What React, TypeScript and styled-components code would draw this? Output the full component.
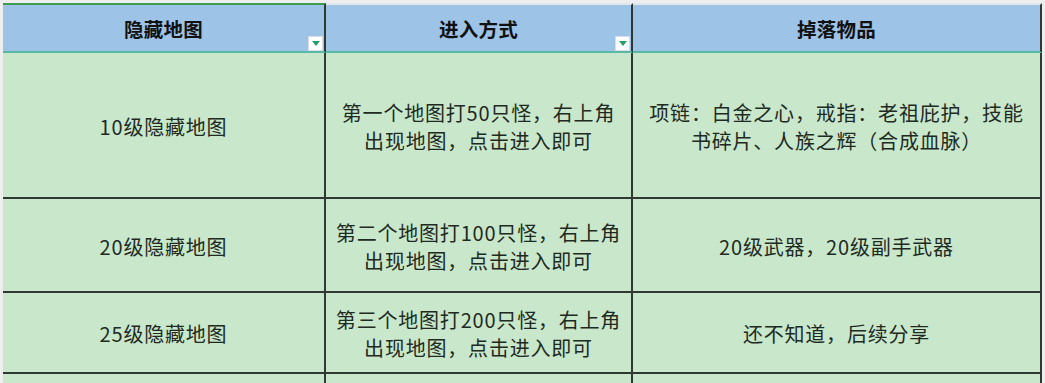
import React from 'react';
import styled, { createGlobalStyle } from 'styled-components';

const GlobalStyle = createGlobalStyle`
  html, body {
    margin: 0;
    padding: 0;
    background: #eeeeee;
    overflow: hidden;
  }
  body {
    font-family: 'Noto Sans CJK SC', 'Noto Sans', sans-serif;
  }
`;

const rows = [
  {
    height: 146,
    name: '10级隐藏地图',
    entry: ['第一个地图打50只怪，右上角', '出现地图，点击进入即可'],
    drops: ['项链：白金之心，戒指：老祖庇护，技能', '书碎片、人族之辉（合成血脉）'],
  },
  {
    height: 94,
    name: '20级隐藏地图',
    entry: ['第二个地图打100只怪，右上角', '出现地图，点击进入即可'],
    drops: ['20级武器，20级副手武器'],
  },
  {
    height: 81,
    name: '25级隐藏地图',
    entry: ['第三个地图打200只怪，右上角', '出现地图，点击进入即可'],
    drops: ['还不知道，后续分享'],
  },
  {
    height: 20,
    name: '',
    entry: [],
    drops: [],
  },
];

const App = () => (
  <>
    <GlobalStyle />
    <Page>
      <Sheet>
        <HeadCell $accent>
          隐藏地图
          <FilterButton />
        </HeadCell>
        <HeadCell>
          进入方式
          <FilterButton />
        </HeadCell>
        <HeadCell>掉落物品</HeadCell>
        {rows.map((row, i) => (
          <React.Fragment key={i}>
            <BodyCell style={{ height: row.height }}>{row.name}</BodyCell>
            <BodyCell style={{ height: row.height }}>
              {row.entry.map((line) => (
                <Line key={line}>{line}</Line>
              ))}
            </BodyCell>
            <BodyCell style={{ height: row.height }}>
              {row.drops.map((line) => (
                <Line key={line}>{line}</Line>
              ))}
            </BodyCell>
          </React.Fragment>
        ))}
      </Sheet>
    </Page>
  </>
);

const FilterButton = () => (
  <StyledFilter>
    <svg width="8" height="5" viewBox="0 0 8 5">
      <path d="M0 0 H8 L4 5 Z" fill="#23a06a" />
    </svg>
  </StyledFilter>
);

export default App;

const Page = styled.div`
  width: 1045px;
  height: 383px;
  padding: 3px 0 0 3px;
  box-sizing: border-box;
  overflow: hidden;
`;

const Sheet = styled.div`
  display: grid;
  grid-template-columns: 323px 307px 409px;
`;

const HeadCell = styled.div<{ $accent?: boolean }>`
  position: relative;
  height: 50px;
  box-sizing: border-box;
  display: flex;
  align-items: center;
  justify-content: center;
  background: #9dc3e6;
  border-top: 2px solid ${(p) => (p.$accent ? '#3d9a52' : '#dfe6ec')};
  border-right: 2px solid #2f3833;
  border-bottom: 2px solid #5ab9a4;
  font-size: 19.5px;
  font-weight: 700;
  color: #111;
  letter-spacing: 0.3px;
`;

const StyledFilter = styled.span`
  position: absolute;
  right: 1px;
  bottom: 0;
  width: 15px;
  height: 15px;
  background: #ffffff;
  border: 1px solid #d6dde4;
  box-sizing: border-box;
  display: flex;
  align-items: center;
  justify-content: center;
`;

const BodyCell = styled.div`
  box-sizing: border-box;
  display: flex;
  flex-direction: column;
  align-items: center;
  justify-content: center;
  background: #c8e7cb;
  border-right: 2px solid #2f3833;
  border-bottom: 2px solid #2f3833;
  font-size: 20px;
  line-height: 28px;
  letter-spacing: 0.8px;
  color: #1f2a23;
  text-align: center;
  padding-top: 3px;
  overflow: hidden;
`;

const Line = styled.div`
  white-space: nowrap;
`;
